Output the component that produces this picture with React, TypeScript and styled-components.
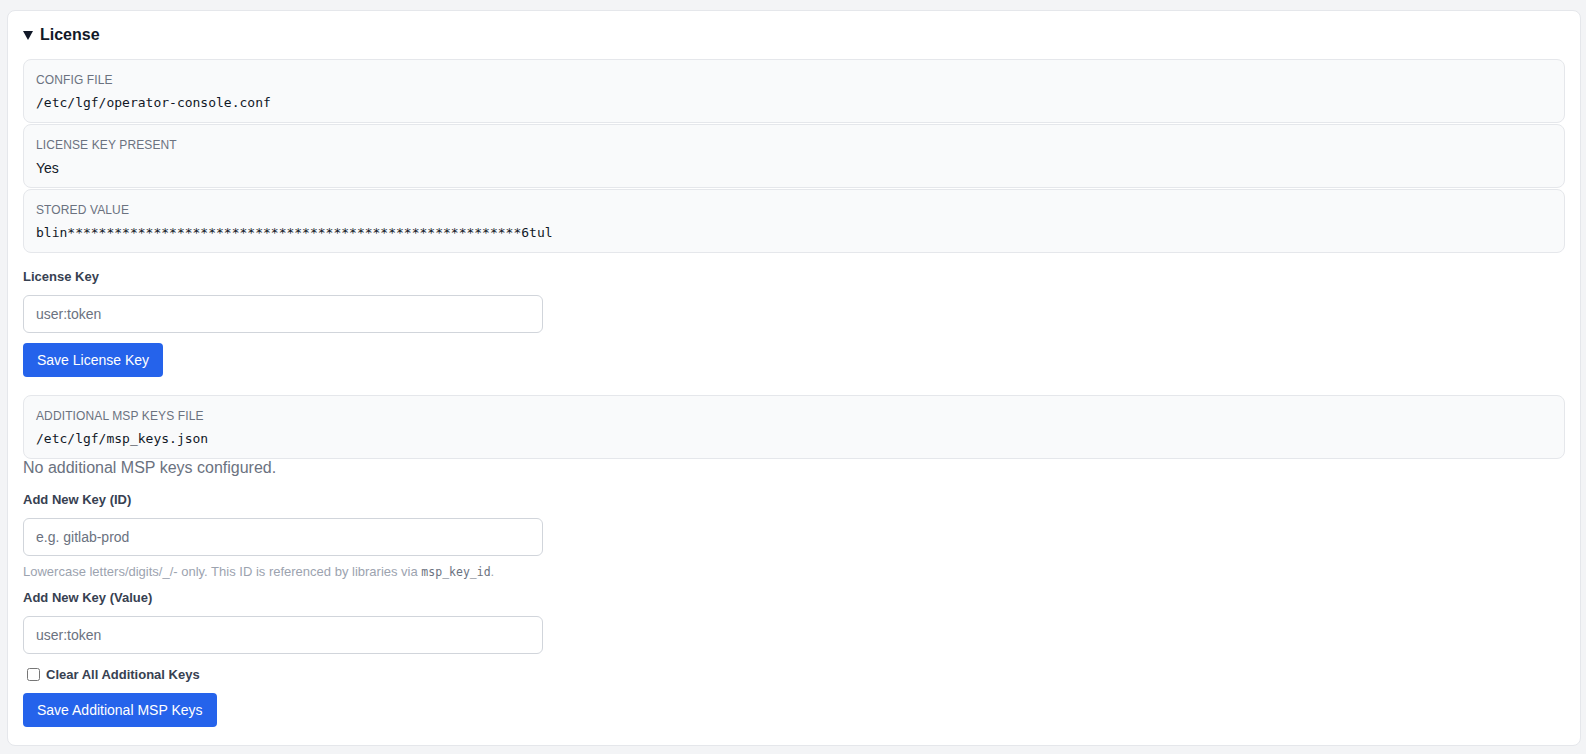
import React from "react";
import styled, { createGlobalStyle } from "styled-components";

const Global = createGlobalStyle`
  html, body { margin: 0; padding: 0; background: #f3f4f6; }
  body { font-family: "Liberation Sans", Arial, sans-serif; color: #111827; }
  * { box-sizing: border-box; }
`;

const Page = styled.div`
  padding: 10px 5px 8px 7px;
`;

const Card = styled.section`
  background: #fff;
  border: 1px solid #e5e7eb;
  border-radius: 8px;
  padding: 12px 15px 18px 15px;
  display: flex;
  flex-direction: column;
`;

const Heading = styled.div`
  display: flex;
  align-items: center;
  gap: 7px;
  height: 24px;
  font-size: 16px;
  font-weight: 700;
  color: #111827;
  margin-bottom: 12px;
`;

const Caret = styled.svg`
  width: 10px;
  height: 9px;
  margin-top: 1px;
  flex: none;
`;

const InfoBox = styled.div<{ $mb?: number }>`
  background: #f9fafb;
  border: 1px solid #e5e7eb;
  border-radius: 8px;
  padding: 12px 12px 9px;
  height: 64px;
  margin-bottom: ${(p) => p.$mb ?? 0}px;
`;

const InfoLabel = styled.div`
  font-size: 12px;
  line-height: 16px;
  color: #6b7280;
  text-transform: uppercase;
  letter-spacing: 0.01em;
  margin-bottom: 6px;
`;

const Mono = styled.div`
  font-family: "DejaVu Sans Mono", "Liberation Mono", monospace;
  font-size: 13px;
  line-height: 18px;
  color: #111827;
`;

const Plain = styled.div`
  font-size: 14px;
  line-height: 18px;
  color: #111827;
`;

const FieldLabel = styled.label<{ $mt?: number }>`
  display: block;
  font-size: 13px;
  font-weight: 700;
  line-height: 20px;
  color: #374151;
  margin-top: ${(p) => p.$mt ?? 0}px;
  margin-bottom: 8px;
`;

const Input = styled.input`
  width: 520px;
  height: 38px;
  padding: 8px 12px;
  border: 1px solid #d1d5db;
  border-radius: 6px;
  font-family: "Liberation Sans", Arial, sans-serif;
  font-size: 14px;
  color: #111827;
  background: #fff;
  outline: none;
  &::placeholder { color: #6b7280; }
`;

const Button = styled.button<{ $mt?: number }>`
  align-self: flex-start;
  height: 34px;
  padding: 0 14px;
  margin-top: ${(p) => p.$mt ?? 10}px;
  background: #2563eb;
  color: #fff;
  border: none;
  border-radius: 4px;
  font-family: "Liberation Sans", Arial, sans-serif;
  font-size: 14px;
  cursor: pointer;
`;

const Empty = styled.div`
  font-size: 16px;
  line-height: 18px;
  color: #6b7280;
`;

const Help = styled.div`
  font-size: 13px;
  line-height: 16px;
  color: #9ca3af;
  margin-top: 8px;
  code {
    font-family: "DejaVu Sans Mono", "Liberation Mono", monospace;
    font-size: 11.5px;
    color: #6b7280;
  }
`;

const CheckRow = styled.label`
  display: flex;
  align-items: center;
  gap: 6px;
  height: 20px;
  margin-top: 10px;
  padding-left: 4px;
  font-size: 13px;
  font-weight: 700;
  color: #374151;
  input { margin: 0; width: 13px; height: 13px; }
`;

const stored = "blin" + "*".repeat(58) + "6tul";

export default function App() {
  return (
    <>
      <Global />
      <Page>
        <Card>
          <Heading>
            <Caret viewBox="0 0 10 9" aria-hidden="true">
              <path d="M0 0 H10 L5 9 Z" fill="#111827" />
            </Caret>
            License
          </Heading>
          <InfoBox $mb={1}>
            <InfoLabel>Config File</InfoLabel>
            <Mono>/etc/lgf/operator-console.conf</Mono>
          </InfoBox>
          <InfoBox $mb={1}>
            <InfoLabel>License Key Present</InfoLabel>
            <Plain>Yes</Plain>
          </InfoBox>
          <InfoBox>
            <InfoLabel>Stored Value</InfoLabel>
            <Mono>{stored}</Mono>
          </InfoBox>

          <FieldLabel $mt={14}>License Key</FieldLabel>
          <Input placeholder="user:token" />
          <Button>Save License Key</Button>

          <InfoBox style={{ marginTop: 18 }}>
            <InfoLabel>Additional MSP Keys File</InfoLabel>
            <Mono>/etc/lgf/msp_keys.json</Mono>
          </InfoBox>
          <Empty>No additional MSP keys configured.</Empty>

          <FieldLabel $mt={13}>Add New Key (ID)</FieldLabel>
          <Input placeholder="e.g. gitlab-prod" />
          <Help>
            Lowercase letters/digits/_/- only. This ID is referenced by libraries via <code>msp_key_id</code>.
          </Help>

          <FieldLabel $mt={8}>Add New Key (Value)</FieldLabel>
          <Input placeholder="user:token" />
          <CheckRow>
            <input type="checkbox" />
            Clear All Additional Keys
          </CheckRow>
          <Button $mt={9}>Save Additional MSP Keys</Button>
        </Card>
      </Page>
    </>
  );
}
